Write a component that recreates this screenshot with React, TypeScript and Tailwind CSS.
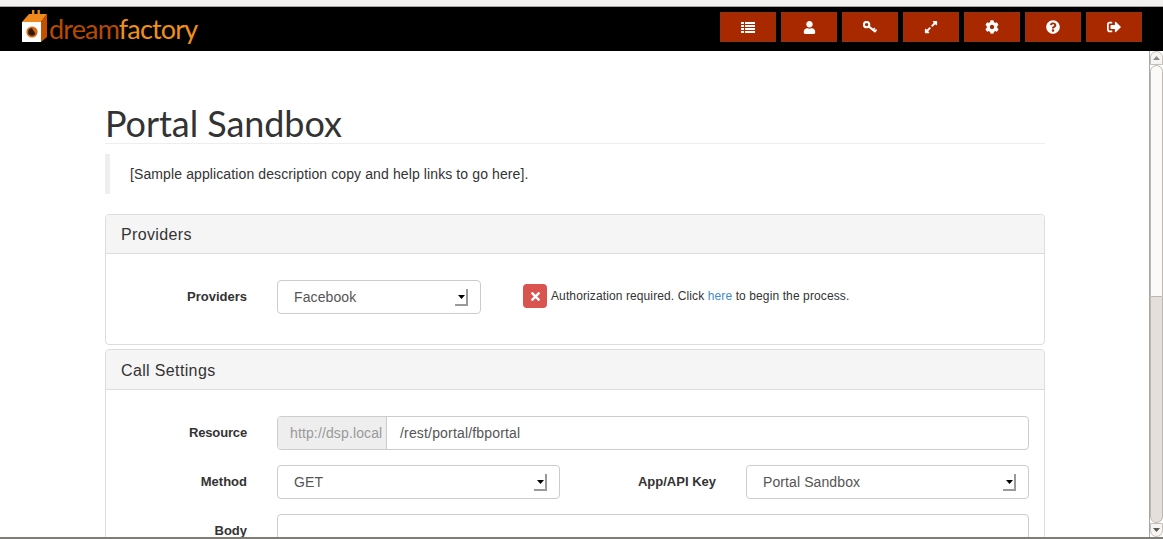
import React from "react";
import { FaUser, FaExpandAlt, FaCog, FaQuestionCircle, FaSignOutAlt, FaTimes } from "react-icons/fa";

function Logo() {
  return (
    <div className="-mt-[2px] flex items-center">
      <svg width="25" height="32" viewBox="0 0 25 32" className="shrink-0">
        <rect x="10" y="0" width="2.4" height="6" fill="#e8841a" />
        <rect x="15.5" y="0" width="2.4" height="6" fill="#e8841a" />
        <polygon points="0,12 7,4 25,4 19,12" fill="#f08a1c" />
        <polygon points="19,12 25,4 25,27 19,32" fill="#c45000" />
        <rect x="0" y="12" width="19" height="20" fill="#ffffff" />
        <circle cx="10" cy="22" r="5.6" fill="#d8660e" />
        <path d="M10 18.2 A3.8 3.8 0 1 0 13.4 23.8 Z" fill="#2a1a10" />
      </svg>
      <span className="ml-[2px] mt-[4px] font-['Lato',sans-serif] text-[27px] leading-none tracking-[-0.85px]">
        <span className="text-[#b84a00]">dream</span>
        <span className="text-[#ef9019]">factory</span>
      </span>
    </div>
  );
}

function NavButton({ children }: { children: React.ReactNode }) {
  return (
    <button className="flex h-[30px] w-[56px] items-center justify-center border border-[#8f3312] bg-[#a82900] text-[14px] text-white">
      {children}
    </button>
  );
}

function ListIcon() {
  return (
    <svg width="14" height="11" viewBox="0 0 14 11" fill="#fff">
      <rect x="0" y="0" width="3" height="2" /><rect x="4" y="0" width="10" height="2" />
      <rect x="0" y="3" width="3" height="2" /><rect x="4" y="3" width="10" height="2" />
      <rect x="0" y="6" width="3" height="2" /><rect x="4" y="6" width="10" height="2" />
      <rect x="0" y="9" width="3" height="2" /><rect x="4" y="9" width="10" height="2" />
    </svg>
  );
}

function KeyIcon() {
  return (
    <svg width="14" height="12" viewBox="0 0 14 12" fill="none" stroke="#fff">
      <circle cx="3.6" cy="3.6" r="2.7" strokeWidth="2" />
      <path d="M5.6 5.4 L12.6 11" strokeWidth="2.1" />
      <path d="M10 9 L11.8 6.9 M12 10.4 L13.6 8.6" strokeWidth="1.6" />
    </svg>
  );
}

function SelectArrow() {
  return (
    <span className="relative block h-[17px] w-[13px] border-b-2 border-r-2 border-b-[#9a9a9a] border-r-[#9a9a9a]">
      <svg width="7" height="4" viewBox="0 0 7 4" className="absolute right-[1px] top-[6px]">
        <polygon points="0,0 7,0 3.5,4" fill="#000" />
      </svg>
    </span>
  );
}

function Select({ value, className }: { value: string; className: string }) {
  return (
    <div className={"flex h-[34px] items-center justify-between rounded-[4px] border border-[#ccc] bg-white pl-[16px] pr-[12px] text-[14px] tracking-[0.1px] text-[#555] " + className}>
      <span>{value}</span>
      <SelectArrow />
    </div>
  );
}

function Label({ children, className }: { children: React.ReactNode; className: string }) {
  return <div className={"shrink-0 text-right text-[13px] font-bold text-[#333] " + className}>{children}</div>;
}

function Panel({ title, children, className, headClass }: { title: string; children: React.ReactNode; className: string; headClass: string }) {
  return (
    <section className={"rounded-[4px] border border-[#ddd] bg-white " + className}>
      <div className={"flex items-center rounded-t-[4px] border-b border-[#ddd] bg-[#f5f5f5] px-[15px] text-[16px] tracking-[0.36px] text-[#333] " + headClass}>
        {title}
      </div>
      {children}
    </section>
  );
}

function Scrollbar() {
  return (
    <div className="flex w-[14px] shrink-0 flex-col border-l border-[#a9a59f] bg-white">
      <div className="flex h-[14px] shrink-0 items-center justify-center rounded-t-[7px] border border-[#c4bfb9] bg-[#f6f5f3]">
        <svg width="7" height="4" viewBox="0 0 7 4"><polygon points="0,4 7,4 3.5,0" fill="#8d8a86" /></svg>
      </div>
      <div className="h-[232px] shrink-0 rounded-t-[7px] border border-[#bdb8b2] bg-[#fbfaf9]" />
      <div className="flex-1 rounded-b-[7px] border-x border-b border-[#bdb8b2] bg-[#e4dfda]" />
      <div className="flex h-[14px] shrink-0 items-center justify-center rounded-b-[7px] border border-[#c4bfb9] bg-[#f6f5f3]">
        <svg width="7" height="4" viewBox="0 0 7 4"><polygon points="0,0 7,0 3.5,4" fill="#5a5855" /></svg>
      </div>
    </div>
  );
}

export default function App() {
  return (
    <div className="flex h-[539px] w-[1163px] flex-col overflow-hidden bg-white font-['Liberation_Sans',Arial,sans-serif] text-[14px] text-[#333]">
      <div className="h-[6px] shrink-0 bg-[#f2f1f0]" />
      <header className="flex h-[45px] shrink-0 items-center justify-between border-t border-[#a9a59f] bg-black pb-[4px] pl-[22px] pr-[21px]">
        <Logo />
        <nav className="flex gap-[5px]">
          <NavButton><ListIcon /></NavButton>
          <NavButton><FaUser className="text-[13px]" /></NavButton>
          <NavButton><KeyIcon /></NavButton>
          <NavButton><FaExpandAlt /></NavButton>
          <NavButton><FaCog /></NavButton>
          <NavButton><FaQuestionCircle /></NavButton>
          <NavButton><FaSignOutAlt /></NavButton>
        </nav>
      </header>
      <div className="flex min-h-0 flex-1 border-b-2 border-[#7f7d7a]">
        <main className="min-w-0 flex-1 overflow-hidden pl-[105px] pr-[104px]">
          <h1 className="mt-[52px] border-b border-[#eee] font-['Lato',sans-serif] text-[36px] font-normal leading-[40px] tracking-[-0.07px] text-[#333]">
            Portal Sandbox
          </h1>
          <blockquote className="mt-[10px] flex h-[40px] items-center border-l-[5px] border-[#eee] pl-[20px] text-[14px] tracking-[0.11px]">
            [Sample application description copy and help links to go here].
          </blockquote>
          <Panel title="Providers" className="mt-[20px] h-[131px]" headClass="h-[39px] pt-[2px]">
            <div className="flex items-center pt-[26px]">
              <Label className="w-[141px]">Providers</Label>
              <Select value="Facebook" className="ml-[30px] w-[204px]" />
              <button className="-mt-[2px] ml-[42px] flex h-[24px] w-[24px] items-center justify-center rounded-[4px] bg-[#d9534f] text-[13px] text-white">
                <FaTimes />
              </button>
              <span className="-mt-[2px] ml-[4px] text-[12px] tracking-[0.11px]">
                Authorization required. Click <a className="text-[#428bca]">here</a> to begin the process.
              </span>
            </div>
          </Panel>
          <Panel title="Call Settings" className="mt-[4px] h-[300px]" headClass="h-[40px] pt-[3px]">
            <div className="flex flex-col gap-[15px] pt-[26px]">
              <div className="flex items-center">
                <Label className="w-[141px] tracking-[-0.15px]">Resource</Label>
                <div className="ml-[30px] flex h-[34px] w-[752px] rounded-[4px] border border-[#ccc]">
                  <div className="flex w-[109px] items-center rounded-l-[3px] border-r border-[#ccc] bg-[#eee] pl-[12px] tracking-[0.13px] text-[#999]">http://dsp.local</div>
                  <div className="flex items-center pl-[13px] tracking-[0.17px] text-[#555]">/rest/portal/fbportal</div>
                </div>
              </div>
              <div className="flex items-center">
                <Label className="w-[141px]">Method</Label>
                <Select value="GET" className="ml-[30px] w-[283px]" />
                <Label className="w-[156px]">App/API Key</Label>
                <Select value="Portal Sandbox" className="ml-[30px] w-[283px]" />
              </div>
              <div className="flex items-start">
                <Label className="w-[141px] pt-[7px]">Body</Label>
                <div className="ml-[30px] h-[100px] w-[752px] rounded-[4px] border border-[#ccc]" />
              </div>
            </div>
          </Panel>
        </main>
        <Scrollbar />
      </div>
    </div>
  );
}
